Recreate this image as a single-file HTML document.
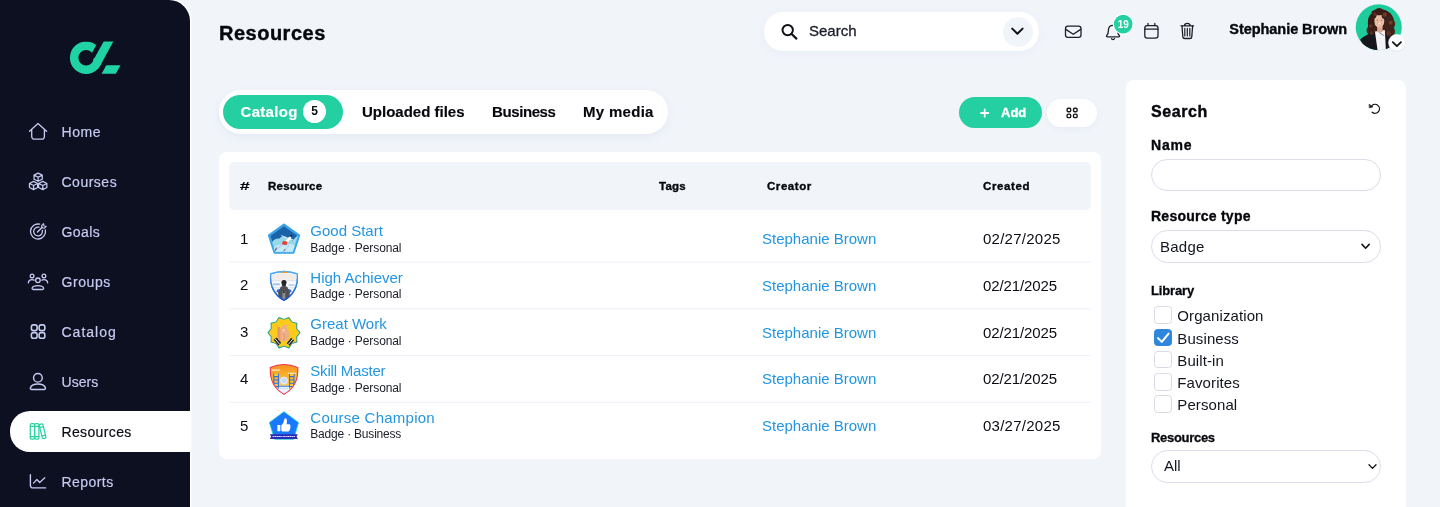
<!DOCTYPE html>
<html>
<head>
<meta charset="utf-8">
<title>Resources</title>
<style>
*{box-sizing:border-box;margin:0;padding:0}
html,body{width:1440px;height:507px;overflow:hidden}
body{background:#f1f5fa;font-family:"Liberation Sans",sans-serif;color:#101223;position:relative}
.abs{position:absolute}
.t{position:absolute;white-space:nowrap;line-height:20px;height:20px}
/* sidebar */
#side{position:absolute;left:0;top:0;width:190px;height:520px;background:#0d1021;border-top-right-radius:21px;box-shadow:0 0 0 1.4px #fff}
#sideline{position:absolute;left:190px;top:20px;width:1px;height:487px;background:#fafbfe}
.nav{position:absolute;left:61.5px;font-size:14px;color:#c6cbf0;line-height:20px;height:20px;white-space:nowrap;-webkit-text-stroke:0.2px #c6cbf0;letter-spacing:0.45px}
.nico{position:absolute;overflow:visible}
#active{position:absolute;left:9.6px;top:411.4px;width:181.4px;height:40.2px;background:#fff;border-radius:20px 0 0 20px}
/* header */
#title{left:219px;top:23px;font-size:20px;font-weight:bold;color:#07080d;letter-spacing:0.5px;-webkit-text-stroke:0.4px #07080d}
#search{position:absolute;left:764px;top:12px;width:275px;height:38.5px;border-radius:19px;background:#fff;box-shadow:0 2px 8px rgba(80,100,160,.05)}
#sdrop{position:absolute;left:1002.5px;top:16.5px;width:30px;height:30px;border-radius:15px;background:#f1f5fa}
#uname{left:1229.3px;top:19px;font-size:14.5px;font-weight:bold;letter-spacing:-0.05px;color:#07080d;-webkit-text-stroke:0.35px #07080d}
/* tabs */
#tabs{position:absolute;left:219px;top:90px;width:449px;height:44px;border-radius:22px;background:#fff;box-shadow:0 3px 10px rgba(80,100,160,.08)}
#tabact{position:absolute;left:223px;top:95px;width:120px;height:34px;border-radius:17px;background:#24cfa2}
.tab{font-size:15px;font-weight:bold;color:#07080d;top:102px;-webkit-text-stroke:0.15px #07080d}
#cnt{position:absolute;left:303px;top:100px;width:23px;height:23px;border-radius:50%;background:#fff;font-size:12px;font-weight:bold;text-align:center;line-height:23px;color:#0b0c14}
#add{position:absolute;left:959px;top:97px;width:83px;height:31px;border-radius:15.5px;background:#24cfa2}
#gridb{position:absolute;left:1047px;top:98.5px;width:50px;height:28px;border-radius:14px;background:#fff;box-shadow:0 2px 6px rgba(80,100,160,.06)}
/* table */
#card{position:absolute;left:219px;top:152px;width:882px;height:307px;border-radius:8px;background:#fff}
#thead{position:absolute;left:229px;top:162px;width:862px;height:47.5px;border-radius:5px;background:#f1f5fa}
.th{font-size:11.5px;font-weight:bold;color:#07080d;top:176.2px;-webkit-text-stroke:0.35px #07080d;letter-spacing:0.25px}
.sep{position:absolute;left:229px;width:862px;height:1px;background:#edeff8}
.num{font-size:15px;color:#0b0c14;left:240px}
.rn{font-size:15px;color:#2396e2;left:310.3px}
.rs{font-size:12px;color:#1b1d2a;left:310.3px;line-height:16px;height:16px;letter-spacing:-0.1px}
.cr{font-size:15px;color:#2396e2;left:762px}
.dt{font-size:15px;color:#0b0c14;left:983px;letter-spacing:0.25px}
.dt.n{letter-spacing:-0.1px}
/* panel */
#panel{position:absolute;left:1126px;top:80px;width:280px;height:440px;border-radius:8px;background:#fff}
.lb{font-weight:bold;color:#07080d;left:1151px}
.inp{position:absolute;left:1151px;width:230px;height:32px;border-radius:16.4px;background:#fff;border:1px solid #dcdcec}
.cb{position:absolute;left:1154.1px;width:17.5px;height:17.5px;border-radius:3.5px;background:#fff;border:1px solid #d9dae6}
.cl{font-size:15px;color:#14161f;left:1177.3px;letter-spacing:0.1px}
</style>
</head>
<body>
<div id="root" style="position:absolute;left:0;top:0;width:1440px;height:507px;will-change:transform">
<!-- SIDEBAR -->
<div id="side"></div>
<svg class="abs" style="left:60px;top:34px" width="70" height="46" viewBox="60 34 70 46">
  <defs><clipPath id="lc"><rect x="60" y="41.5" width="70" height="40"/></clipPath></defs>
  <g clip-path="url(#lc)">
    <circle cx="86.1" cy="57.7" r="11.95" fill="none" stroke="#1fd3a4" stroke-width="8.5"/>
    <polygon points="101.16,36 107,36 95,58 89.2,58" fill="#0d1021"/>
    <polygon points="106.65,36 116.3,36 100.3,65.4 92.87,61.37" fill="#1fd3a4"/>
  </g>
  <polygon points="106.3,65.2 120.5,65.2 115.8,73.8 101.6,73.8" fill="#1fd3a4"/>
</svg>

<div id="active"></div>
<div class="nav" style="top:122px;letter-spacing:0.55px">Home</div>
<div class="nav" style="top:172px;letter-spacing:0.5px">Courses</div>
<div class="nav" style="top:222px;letter-spacing:0.4px">Goals</div>
<div class="nav" style="top:272px;letter-spacing:0.58px">Groups</div>
<div class="nav" style="top:322px;letter-spacing:1.0px">Catalog</div>
<div class="nav" style="top:372px;letter-spacing:0.03px">Users</div>
<div class="nav" style="top:422px;color:#0b0c14;-webkit-text-stroke:0.2px #0b0c14;letter-spacing:0.36px">Resources</div>
<div class="nav" style="top:472px;letter-spacing:0.44px">Reports</div>


<!-- HEADER -->
<div class="t" id="title" style="line-height:24px;height:24px;top:21px">Resources</div>
<div id="search"></div>
<div id="sdrop"></div>
<div class="t" style="left:809px;top:21px;font-size:15px;color:#1a1c2b;-webkit-text-stroke:0.3px #1a1c2b">Search</div>
<div class="t" id="uname">Stephanie Brown</div>


<svg class="abs" style="left:1346px;top:0" width="70" height="56" viewBox="0 0 634 507">
 <defs>
  <clipPath id="avc"><circle cx="296.5" cy="246.5" r="208.5"/></clipPath>
  <filter id="blr" x="-10%" y="-10%" width="120%" height="120%"><feGaussianBlur stdDeviation="3"/></filter>
 </defs>
 <circle cx="296.5" cy="249" r="216" fill="#e9e4f3" opacity=".55"/>
 <circle cx="296.5" cy="246.5" r="212" fill="#fbf3fb"/>
 <circle cx="296.5" cy="246.5" r="208.5" fill="#1fcc9c"/>
 <g clip-path="url(#avc)" filter="url(#blr)">
  <!-- back hair -->
  <ellipse cx="318" cy="205" rx="118" ry="120" fill="#3b1f16"/>
  <circle cx="232" cy="275" r="46" fill="#43241a"/>
  <circle cx="392" cy="285" r="52" fill="#4a281c"/>
  <circle cx="300" cy="125" r="52" fill="#3d2017"/>
  <circle cx="410" cy="215" r="36" fill="#56301f"/>
  <!-- arm -->
  <ellipse cx="152" cy="382" rx="24" ry="20" fill="#e9bca4"/>
  <!-- jacket -->
  <path d="M128 360 Q190 300 275 288 L300 470 L190 470 Q160 420 128 360Z" fill="#16161a"/>
  <path d="M345 288 Q400 298 430 335 L410 470 L350 470Z" fill="#16161a"/>
  <!-- shirt -->
  <path d="M262 285 L352 272 L362 470 L288 470Z" fill="#f4f4f7"/>
  <path d="M305 300 L346 322" stroke="#5b5b66" stroke-width="6" fill="none"/>
  <!-- neck -->
  <path d="M282 235 H332 V285 L305 300 L282 285Z" fill="#dca88f"/>
  <!-- face -->
  <ellipse cx="301" cy="190" rx="46" ry="60" fill="#ebbda5"/>
  <ellipse cx="284" cy="182" rx="7" ry="4" fill="#4a2a20"/>
  <ellipse cx="322" cy="182" rx="7" ry="4" fill="#4a2a20"/>
  <ellipse cx="304" cy="217" rx="17" ry="7" fill="#fff"/>
  <path d="M285 212 Q304 236 324 212" stroke="#b5695a" stroke-width="4" fill="none"/>
  <!-- front hair -->
  <ellipse cx="228" cy="215" rx="30" ry="85" fill="#3b1f16"/>
  <ellipse cx="392" cy="235" rx="44" ry="100" fill="#43241a"/>
  <ellipse cx="300" cy="112" rx="70" ry="26" fill="#3a1e15"/><circle cx="345" cy="150" r="22" fill="#43241a"/><circle cx="258" cy="150" r="16" fill="#3b1f16"/>
  <circle cx="352" cy="132" r="20" fill="#6a3a27"/>
  <circle cx="404" cy="205" r="18" fill="#6f3e29"/>
  <circle cx="224" cy="235" r="16" fill="#61341f"/>
  <circle cx="385" cy="300" r="20" fill="#5d3220"/>
  <circle cx="262" cy="128" r="14" fill="#5d3220"/>
  <circle cx="232" cy="300" r="16" fill="#54301f"/>
 </g>
 <circle cx="460" cy="390" r="80" fill="#dfe2f0" opacity=".5"/>
 <circle cx="460" cy="385" r="75" fill="#fff"/>
 <path d="M424 382 L461 418 L498 382" stroke="#15171c" stroke-width="17" fill="none" stroke-linecap="round" stroke-linejoin="round"/>
</svg>

<!-- TABS -->
<div id="tabs"></div>
<div id="tabact"></div>
<div class="t tab" style="left:240.5px;color:#fff;letter-spacing:0.3px;-webkit-text-stroke:0.15px #fff">Catalog</div>
<div id="cnt">5</div>
<div class="t tab" style="left:362px">Uploaded files</div>
<div class="t tab" style="left:492px;letter-spacing:-0.4px">Business</div>
<div class="t tab" style="left:583px;letter-spacing:0.3px">My media</div>
<div id="add"></div>
<div class="t" style="left:1001px;top:102.5px;font-size:13px;font-weight:bold;color:#fff;-webkit-text-stroke:0.35px #fff">Add</div>
<div id="gridb"></div>

<!-- TABLE -->
<div id="card"></div>
<div id="thead"></div>
<div class="t th" style="left:239.6px;transform:scaleX(1.5);transform-origin:0 50%;-webkit-text-stroke:0.15px #07080d">#</div>
<div class="t th" style="left:268px">Resource</div>
<div class="t th" style="left:659px">Tags</div>
<div class="t th" style="left:767px;letter-spacing:0.55px">Creator</div>
<div class="t th" style="left:983px;letter-spacing:0.6px">Created</div>


<div class="sep" style="top:261px;background:#f8f9fc"></div>
<div class="sep" style="top:262px;background:#f4f5fb"></div>
<div class="sep" style="top:308px;background:#f3f5fa"></div>
<div class="sep" style="top:309px;background:#f9f9fd"></div>
<div class="sep" style="top:355px;background:#eff1f9"></div>
<div class="sep" style="top:356px;background:#fdfdfe"></div>
<div class="sep" style="top:401px;background:#fcfdfe"></div>
<div class="sep" style="top:402px;background:#f0f1f9"></div>
<!-- rows -->
<div class="t num" style="top:229px">1</div>
<div class="t rn" style="top:221px">Good Start</div>
<div class="t rs" style="top:240px">Badge · Personal</div>
<div class="t cr" style="top:229px">Stephanie Brown</div>
<div class="t dt" style="top:229px">02/27/2025</div>

<div class="t num" style="top:275px">2</div>
<div class="t rn" style="top:267.75px">High Achiever</div>
<div class="t rs" style="top:286px">Badge · Personal</div>
<div class="t cr" style="top:275.75px">Stephanie Brown</div>
<div class="t dt n" style="top:275.75px">02/21/2025</div>

<div class="t num" style="top:322px">3</div>
<div class="t rn" style="top:314px">Great Work</div>
<div class="t rs" style="top:333px">Badge · Personal</div>
<div class="t cr" style="top:322.5px">Stephanie Brown</div>
<div class="t dt n" style="top:322.5px">02/21/2025</div>

<div class="t num" style="top:369.25px">4</div>
<div class="t rn" style="top:361.25px;letter-spacing:-0.2px">Skill Master</div>
<div class="t rs" style="top:380.25px">Badge · Personal</div>
<div class="t cr" style="top:369.25px">Stephanie Brown</div>
<div class="t dt n" style="top:369.25px">02/21/2025</div>

<div class="t num" style="top:416px">5</div>
<div class="t rn" style="top:408px;letter-spacing:0.25px">Course Champion</div>
<div class="t rs" style="top:426px;letter-spacing:-0.2px">Badge · Business</div>
<div class="t cr" style="top:416px">Stephanie Brown</div>
<div class="t dt" style="top:416px">03/27/2025</div>


<svg class="abs" style="left:262px;top:218px" width="44" height="42" viewBox="0 0 531 507">
 <defs><clipPath id="b1c"><path d="M265 92 L436 214 L370 412 L160 412 L96 214 Z"/></clipPath></defs>
 <path d="M265 80 L448 210 L378 420 L152 420 L84 210 Z" fill="#1a63aa" stroke="#37a2ea" stroke-width="26" stroke-linejoin="round"/>
 <g clip-path="url(#b1c)">
  <path d="M90 350 Q140 235 205 250 Q250 205 300 240 Q345 225 372 280 Q405 222 450 200 L385 425 L150 425 Z" fill="#97d8ea"/>
  <path d="M110 390 Q190 290 270 330 Q340 290 420 345 L385 425 L150 425 Z" fill="#c4ecf5"/>
  <path d="M255 316 L170 380" stroke="#c4c2ee" stroke-width="14" stroke-linecap="round"/>
  <path d="M292 312 L325 338 L275 392" stroke="#b6ccf0" stroke-width="13" stroke-linecap="round" stroke-linejoin="round" fill="none"/>
  <path d="M172 362 L163 392" stroke="#3b3560" stroke-width="11" stroke-linecap="round"/>
  <path d="M275 380 L262 398" stroke="#3b3560" stroke-width="10" stroke-linecap="round"/>
  <path d="M292 290 L338 240" stroke="#ffffff" stroke-width="32" stroke-linecap="round"/>
  <path d="M305 240 L236 214" stroke="#eef6fc" stroke-width="11" stroke-linecap="round"/>
  <path d="M345 255 L385 268" stroke="#eef6fc" stroke-width="11" stroke-linecap="round"/>
  <path d="M256 280 L304 290 L292 324 L246 314 Z" fill="#ea3a2e" stroke="#ea3a2e" stroke-width="8" stroke-linejoin="round"/>
  <circle cx="352" cy="213" r="13" fill="#2b2b52"/>
 </g>
 <path d="M265 94 L434 215 L368 408 L162 408 L98 215 Z" fill="none" stroke="#7fd0f6" stroke-width="6" stroke-linejoin="round" opacity=".55"/>
</svg><svg class="abs" style="left:262px;top:265px" width="44" height="42" viewBox="0 0 531 507">
 <defs>
  <linearGradient id="b2g" x1="0" y1="0" x2="0" y2="1"><stop offset="0" stop-color="#4fb0f3"/><stop offset="1" stop-color="#0f4fc6"/></linearGradient>
  <clipPath id="b2c"><path d="M104 108 Q265 48 426 108 Q440 330 265 426 Q90 330 104 108 Z"/></clipPath>
 </defs>
 <path d="M104 108 Q265 48 426 108 Q440 330 265 426 Q90 330 104 108 Z" fill="#f3f3f6" stroke="url(#b2g)" stroke-width="16" stroke-linejoin="round"/>
 <g clip-path="url(#b2c)">
  <rect x="90" y="105" width="350" height="70" fill="#f3ebe6"/>
  <rect x="90" y="180" width="350" height="12" fill="#dfe3ec"/>
  <rect x="90" y="196" width="350" height="70" fill="#f6f8fc"/>
  <rect x="130" y="222" width="85" height="22" fill="#9fc3ee"/>
  <rect x="320" y="232" width="70" height="20" fill="#b4d0f2"/>
  <rect x="90" y="270" width="350" height="10" fill="#dfe3ec"/>
  <rect x="90" y="284" width="350" height="150" fill="#eef0f5"/>
  <path d="M228 288 L186 296 L172 324 L215 340 Z" fill="#2d6fdc"/>
  <path d="M302 288 L344 296 L358 322 L315 340 Z" fill="#2d6fdc"/>
  <path d="M226 262 Q265 242 304 262 L336 335 L326 430 L204 430 L194 335 Z" fill="#4f5054"/>
  <rect x="247" y="315" width="34" height="115" fill="#8c8d92"/>
  <rect x="252" y="318" width="22" height="18" fill="#1d1d20"/>
  <circle cx="265" cy="212" r="31" fill="#232325"/>
  <rect x="240" y="215" width="50" height="45" rx="18" fill="#2a2a2c"/>
 </g>
 <path d="M104 108 Q265 48 426 108 Q440 330 265 426 Q90 330 104 108 Z" fill="none" stroke="url(#b2g)" stroke-width="16" stroke-linejoin="round"/>
 <rect x="230" y="80" width="70" height="17" rx="6" fill="#f7981d"/>
</svg>
<svg class="abs" style="left:262px;top:312px" width="44" height="42" viewBox="0 0 531 507">
 <polygon points="457.0,250.0 417.2,299.4 420.3,362.9 359.0,379.4 324.3,432.6 265.0,410.0 205.7,432.6 171.0,379.4 109.7,362.9 112.8,299.4 73.0,250.0 112.8,200.6 109.7,137.1 171.0,120.6 205.7,67.4 265.0,90.0 324.3,67.4 359.0,120.6 420.3,137.1 417.2,200.6" fill="#f9c91f" stroke="#22a08a" stroke-width="14" stroke-linejoin="round"/>
 <polygon points="443.0,250.0 409.6,297.0 409.0,354.6 354.3,373.0 320.0,419.3 265.0,402.0 210.0,419.3 175.7,373.0 121.0,354.6 120.4,297.0 87.0,250.0 120.4,203.0 121.0,145.4 175.7,127.0 210.0,80.7 265.0,98.0 320.0,80.7 354.3,127.0 409.0,145.4 409.6,203.0" fill="#fbcb1c" stroke="#fbcb1c" stroke-width="6" stroke-linejoin="round"/>
 <path d="M140 335 L198 405 L232 372 L178 308 Z" fill="#23233a"/>
 <path d="M156 322 L214 390" stroke="#fff" stroke-width="11"/>
 <path d="M388 340 L332 408 L298 378 L352 312 Z" fill="#23233a"/>
 <path d="M372 326 L314 394" stroke="#fff" stroke-width="11"/>
 <path d="M185 185 Q198 165 214 180 L255 300 Q245 355 200 340 Q180 280 185 185 Z" fill="#e2996f"/>
 <path d="M225 200 Q238 158 302 150 Q316 168 292 190 Q336 230 332 295 Q305 360 250 352 Q210 335 220 285 Z" fill="#eeae86"/>
 <path d="M240 215 Q262 196 278 214 L262 244 Z" fill="#f8d3bb"/>
 <path d="M258 262 Q282 300 262 340" stroke="#d98d62" stroke-width="8" fill="none"/>
</svg><svg class="abs" style="left:262px;top:358px" width="44" height="42" viewBox="0 0 531 507">
 <defs>
  <linearGradient id="b4g" x1="0" y1="0" x2="0" y2="1"><stop offset="0" stop-color="#f7921e"/><stop offset=".55" stop-color="#fbc033"/><stop offset="1" stop-color="#fde27a"/></linearGradient>
  <clipPath id="b4c"><path d="M100 116 Q265 40 432 116 Q445 340 265 438 Q88 340 100 116 Z"/></clipPath>
 </defs>
 <path d="M100 116 Q265 40 432 116 Q445 340 265 438 Q88 340 100 116 Z" fill="url(#b4g)"/>
 <g clip-path="url(#b4c)">
  <rect x="115" y="138" width="105" height="16" rx="8" fill="#fdf0d8" opacity=".9"/>
  <rect x="310" y="178" width="100" height="14" rx="7" fill="#fdf0d8" opacity=".9"/>
  <circle cx="265" cy="272" r="47" fill="#dfe8fb"/>
  <circle cx="265" cy="272" r="30" fill="#c9d8f6"/>
  <path d="M195 335 H335 V450 H195 Z" fill="#e9f1ff"/>
  <rect x="195" y="335" width="140" height="12" fill="#3b7ae4"/>
  <rect x="215" y="362" width="100" height="12" fill="#cfe0fb"/>
  <g fill="none" stroke="#2f6fe0" stroke-width="13">
   <path d="M143 190 V368 M198 190 V368 M143 225 H198 M143 265 H198 M143 305 H198 M143 345 H198"/>
   <path d="M332 190 V368 M386 190 V368 M332 225 H386 M332 265 H386 M332 305 H386 M332 345 H386"/>
  </g>
  <rect x="150" y="196" width="41" height="22" fill="#fbd448" opacity=".8"/>
  <rect x="339" y="196" width="41" height="22" fill="#fbd448" opacity=".8"/>
 </g>
 <path d="M100 116 Q265 40 432 116 Q445 340 265 438 Q88 340 100 116 Z" fill="none" stroke="#ea3550" stroke-width="13" stroke-linejoin="round"/>
</svg>
<svg class="abs" style="left:262px;top:405px" width="44" height="42" viewBox="0 0 531 507">
 <rect x="185" y="62" width="30" height="8" rx="4" fill="#f6e36a"/>
 <rect x="323" y="62" width="30" height="8" rx="4" fill="#f6e36a"/>
 <path d="M265 82 L440 212 L382 412 L152 412 L90 212 Z" fill="#1a78ff" stroke="#1fd0c8" stroke-width="12" stroke-linejoin="round"/>
 <path d="M265 92 L430 215 L375 404 L158 404 L100 215 Z" fill="#1a78ff"/>
 <g transform="translate(265 250) scale(1.18) translate(-265 -246)"><rect x="198" y="240" width="30" height="62" rx="4" fill="#fff"/>
 <path d="M238 245 Q262 225 268 185 Q272 165 288 172 Q300 182 292 232 L322 232 Q335 236 330 252 Q336 262 328 272 Q332 284 322 290 Q322 302 308 304 L250 304 Q240 302 238 296 Z" fill="#fff"/></g>
 <path d="M95 352 H432 L418 381 L432 410 H95 L110 381 Z" fill="#2a2cb4"/>
 <rect x="128" y="374" width="270" height="13" rx="3" fill="#e6e8ff" opacity=".95"/>
 <g fill="#2a2cb4"><rect x="150" y="374" width="5" height="13"/><rect x="176" y="374" width="5" height="13"/><rect x="200" y="374" width="5" height="13"/><rect x="226" y="374" width="5" height="13"/><rect x="246" y="374" width="9" height="13"/><rect x="276" y="374" width="5" height="13"/><rect x="300" y="374" width="5" height="13"/><rect x="326" y="374" width="5" height="13"/><rect x="350" y="374" width="5" height="13"/><rect x="374" y="374" width="5" height="13"/></g>
</svg>
<!-- PANEL -->
<div id="panel"></div>
<div class="t lb" style="top:102px;font-size:16px;letter-spacing:0.6px;-webkit-text-stroke:0.4px #07080d">Search</div>
<div class="t lb" style="top:135px;font-size:14px;letter-spacing:0.8px;-webkit-text-stroke:0.35px #07080d">Name</div>
<div class="inp" style="top:159px"></div>
<div class="t lb" style="top:205.5px;font-size:14px;letter-spacing:0.25px;-webkit-text-stroke:0.35px #07080d">Resource type</div>
<div class="inp" style="top:230.2px;height:32.4px"></div>
<div class="t" style="left:1160px;top:236.5px;font-size:15px;color:#14161f;letter-spacing:0.25px">Badge</div>
<div class="t lb" style="top:281px;font-size:13px;letter-spacing:-0.15px;-webkit-text-stroke:0.3px #07080d">Library</div>
<div class="cb" style="top:306.3px"></div>
<div class="cb" style="top:328.5px;background:#2f86dd;border-color:#2f86dd"></div>
<div class="cb" style="top:350.9px"></div>
<div class="cb" style="top:373px"></div>
<div class="cb" style="top:395.2px"></div>
<div class="t cl" style="top:306px">Organization</div>
<div class="t cl" style="top:328.5px">Business</div>
<div class="t cl" style="top:350.5px">Built-in</div>
<div class="t cl" style="top:372.5px">Favorites</div>
<div class="t cl" style="top:395px">Personal</div>
<div class="t lb" style="top:427.5px;font-size:13px;letter-spacing:-0.3px;-webkit-text-stroke:0.3px #07080d">Resources</div>
<div class="inp" style="top:450px;height:32.8px"></div>
<div class="t" style="left:1164px;top:456px;font-size:15px;color:#14161f">All</div>

<svg class="abs" style="left:0;top:0;pointer-events:none" width="1440" height="507" viewBox="0 0 1440 507" fill="none" stroke-linecap="round" stroke-linejoin="round">
 <!-- nav icons -->
 <g stroke="#c6cbf0" stroke-width="1.3">
  <path d="M29.5 131.3 L38 123.5 L46.6 131.3 M31.7 129.6 V136.6 a2.6 2.6 0 0 0 2.6 2.6 H41.8 a2.6 2.6 0 0 0 2.6 -2.6 V129.6"/>
  <path d="M38.15 173.10 L42.25 175.15 L42.25 179.25 L38.15 181.30 L34.05 179.25 L34.05 175.15Z M38.15 177.20 L38.15 181.30 M38.15 177.20 L42.25 175.15 M38.15 177.20 L34.05 175.15 M33.55 181.40 L37.65 183.45 L37.65 187.55 L33.55 189.60 L29.45 187.55 L29.45 183.45Z M33.55 185.50 L33.55 189.60 M33.55 185.50 L37.65 183.45 M33.55 185.50 L29.45 183.45 M42.75 181.40 L46.85 183.45 L46.85 187.55 L42.75 189.60 L38.65 187.55 L38.65 183.45Z M42.75 185.50 L42.75 189.60 M42.75 185.50 L46.85 183.45 M42.75 185.50 L38.65 183.45" stroke-width="1.25" stroke-linejoin="round"/>
  <!-- goals -->
  <path d="M39.6 224.2 A7.5 7.5 0 1 0 45.3 229.8"/>
  <path d="M39 227.2 A4.4 4.4 0 1 0 42.3 230.4"/>
  <path d="M37.5 232 L42.2 227.3" stroke-width="1.4"/>
  <path d="M41.8 227.7 L41.6 225.6 L43.6 223.7 L43.9 226 L46.2 226.3 L44.2 228.3 Z" stroke-width="1.1"/>
  <!-- groups -->
  <circle cx="37.9" cy="280.3" r="2.3"/>
  <path d="M33.2 289.5 H42.6 a1.1 1.1 0 0 0 1 -1.5 C43 286.4 41.2 285.7 37.9 285.7 C34.6 285.7 32.8 286.4 32.2 288 a1.1 1.1 0 0 0 1 1.5 Z"/>
  <circle cx="32.1" cy="275.9" r="1.85"/>
  <circle cx="43.9" cy="275.9" r="1.85"/>
  <path d="M28.3 282.8 C28.6 280.6 30 279.6 32.1 279.6 C32.9 279.6 33.6 279.8 34.1 280.1"/>
  <path d="M47.7 282.8 C47.4 280.6 46 279.6 43.9 279.6 C43.1 279.6 42.4 279.8 41.9 280.1"/>
  <!-- catalog -->
  <g stroke-width="1.6">
  <rect x="31.4" y="324.9" width="5.7" height="5.7" rx="2.1"/>
  <rect x="39.15" y="324.9" width="5.7" height="5.7" rx="2.1"/>
  <rect x="31.4" y="332.6" width="5.7" height="5.7" rx="2.1"/>
  <rect x="39.15" y="332.6" width="5.7" height="5.7" rx="2.1"/>
  </g>
  <!-- users -->
  <circle cx="37.9" cy="377.75" r="4.35" stroke-width="1.45"/>
  <path d="M31.6 389.4 H44.2 a1.25 1.25 0 0 0 1.15 -1.8 C44.4 385.3 41.9 384 37.9 384 C33.9 384 31.4 385.3 30.45 387.6 a1.25 1.25 0 0 0 1.15 1.8 Z" stroke-width="1.45"/>
  <!-- reports -->
  <path d="M30.4 474.8 V485.4 a2.5 2.5 0 0 0 2.5 2.5 H45.6" stroke-width="1.4"/>
  <path d="M33.5 483.2 L36.9 479.5 L39.7 482.5 L44.8 477.7" stroke-width="1.2"/>
 </g>
 <!-- resources (active) -->
 <g stroke="#2ad2a2" stroke-width="1.25">
  <rect x="30.3" y="423.7" width="4.3" height="15.5" rx="1.4"/>
  <path d="M30.3 426.3 H34.6 M30.3 436.6 H34.6"/>
  <rect x="34.6" y="423.7" width="4.3" height="15.5" rx="1.4"/>
  <path d="M34.6 426.3 H38.9 M34.6 436.6 H38.9"/>
  <path d="M39.3 425.6 Q39 424.6 40 424.3 L41.6 423.9 Q42.6 423.6 42.9 424.6 L45.9 436.9 Q46.2 437.9 45.2 438.2 L43.6 438.6 Q42.6 438.9 42.3 437.9 Z M39.9 427.6 L43.5 426.7 M41.9 436 L45.5 435.1"/>
 </g>
 <!-- header icons -->
 <g stroke="#101217">
  <circle cx="787.7" cy="30.1" r="5.2" stroke-width="2"/>
  <path d="M791.6 34 L796.4 38.6" stroke-width="2.2"/>
  <path d="M1012.2 28.6 L1017.4 33.8 L1022.6 28.6" stroke-width="2"/>
  <g stroke-width="1.3" stroke="#1d1f25">
   <rect x="1065.5" y="26.2" width="15.5" height="11.2" rx="2.4"/>
   <path d="M1065.8 29.4 L1073.25 34.3 L1080.7 29.4"/>
   <!-- bell -->
   <path d="M1113 25.3 C1109.8 25.3 1108.4 27.8 1108.4 30.4 C1108.4 33.4 1107.6 34.6 1106.7 35.6 C1106.2 36.2 1106.6 36.9 1107.4 36.9 H1118.6 C1119.4 36.9 1119.8 36.2 1119.3 35.6 C1118.4 34.6 1117.6 33.4 1117.6 30.4 C1117.6 27.8 1116.2 25.3 1113 25.3 Z"/>
   <path d="M1111.5 38.6 C1111.9 39.8 1114.1 39.8 1114.5 38.6"/>
   <!-- calendar -->
   <rect x="1144.8" y="25.6" width="13.2" height="12.6" rx="2.4"/>
   <path d="M1144.8 29.2 H1158 M1148 23.4 V25.6 M1154.8 23.4 V25.6"/>
   <!-- trash -->
   <path d="M1181 25.8 H1193.6 M1184.4 25.6 C1184.6 24 1185.4 23.4 1187.3 23.4 C1189.2 23.4 1190 24 1190.2 25.6"/>
   <path d="M1182 26 L1182.8 36.6 a2 2 0 0 0 2 1.9 H1189.8 a2 2 0 0 0 2 -1.9 L1192.6 26"/>
   <path d="M1184.8 28.4 V36 M1187.3 28.4 V36 M1189.8 28.4 V36" stroke-width="1.2"/>
  </g>
 </g>
 <!-- reset icon -->
 <path d="M1371.9 105.6 A4.45 4.45 0 1 1 1372.1 112.2" stroke="#111318" stroke-width="1.25"/>
 <path d="M1369.4 104.4 L1372.9 106.9 L1369.6 107.8 Z" fill="#111318" stroke="#111318" stroke-width="0.6"/>
 <!-- select chevrons, checkmark -->
 <path d="M1362 244.4 L1365.6 248.2 L1369.2 244.4" stroke="#15171c" stroke-width="1.6"/>
 <path d="M1369 464.7 L1372.5 468.4 L1376 464.7" stroke="#15171c" stroke-width="1.35"/>
 <path d="M1158 338.1 L1161.8 341.9 L1168.6 333.6" stroke="#fff" stroke-width="2"/>
 <!-- bell badge -->
 <circle cx="1123.2" cy="24.1" r="10.5" fill="#ffffff"/>
 <circle cx="1123.2" cy="24.1" r="9.3" fill="#24cfa2"/>
 <!-- add plus -->
 <path d="M981 113 H988.4 M984.7 109.3 V116.7" stroke="#fff" stroke-width="1.8"/>
 <!-- grid btn icon -->
 <g stroke="#15171c" stroke-width="1.4">
  <rect x="1067.1" y="108.3" width="3.6" height="3.5" rx="1.2"/>
  <rect x="1073.5" y="108.3" width="3.6" height="3.5" rx="1.2"/>
  <rect x="1067.1" y="114.1" width="3.6" height="3.5" rx="1.2"/>
  <rect x="1073.5" y="114.1" width="3.6" height="3.5" rx="1.2"/>
 </g>
</svg>
<div class="t" style="left:1113.2px;top:15px;width:20px;text-align:center;font-size:10px;font-weight:bold;color:#fff">19</div>


</div>
</body>
</html>
